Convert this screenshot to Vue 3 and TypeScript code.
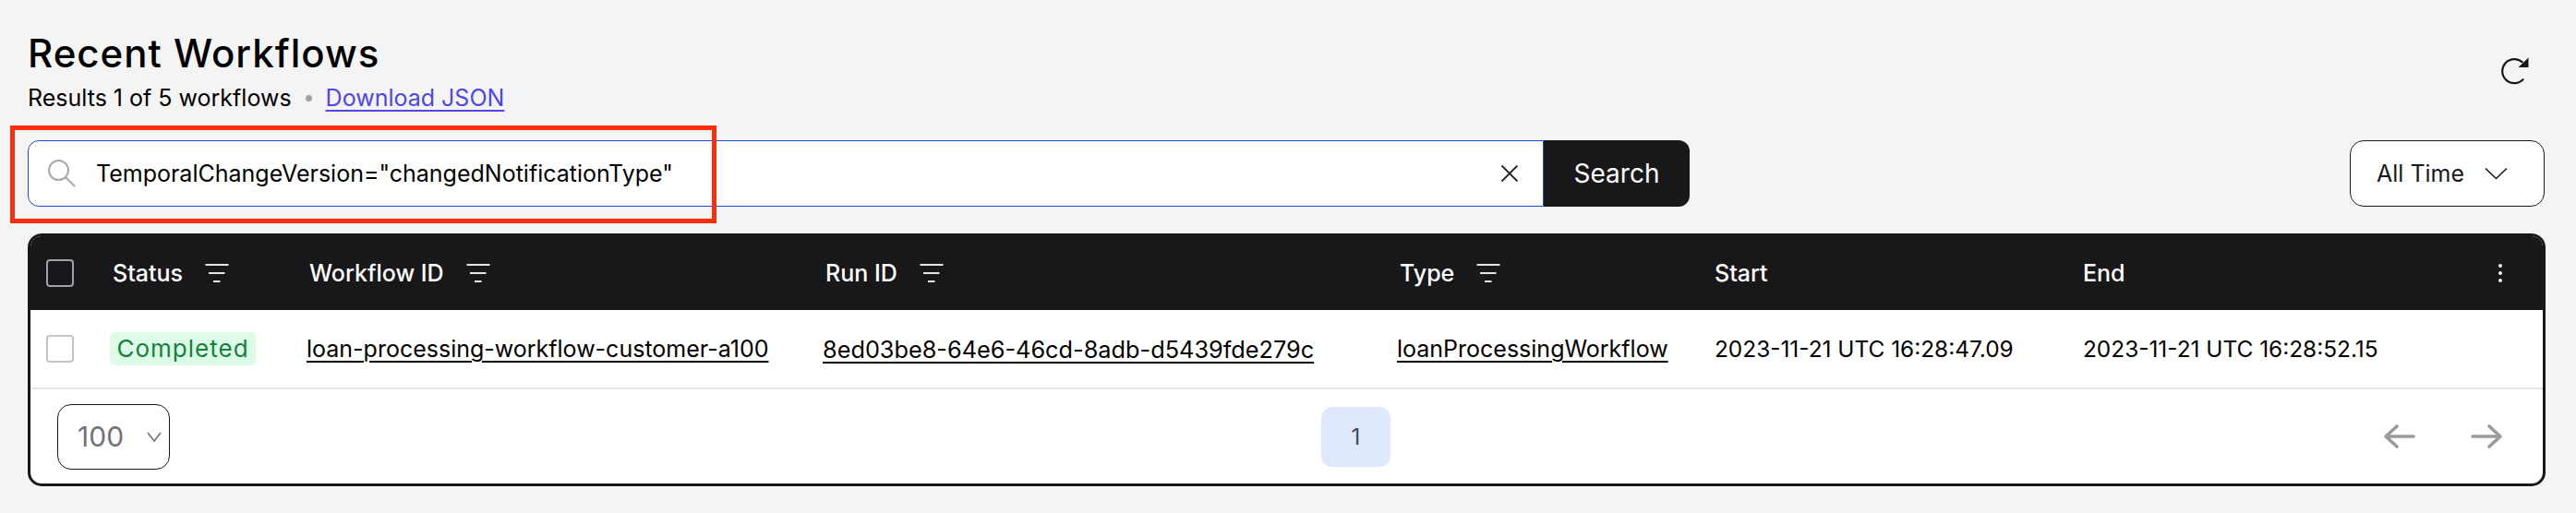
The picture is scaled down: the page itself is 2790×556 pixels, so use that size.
<template>
  <div class="page">
    <header class="page-head">
      <div class="heading">
        <h1 class="title">Recent Workflows</h1>
        <p class="summary">
          <span>Results 1 of 5 workflows</span>
          <span class="dot"></span>
          <a class="json-link" href="#">Download JSON</a>
        </p>
      </div>
      <button class="refresh" aria-label="Refresh">
        <svg width="30" height="30" viewBox="0 0 30 30" fill="none">
          <path d="M23.5 24.2A13 13 0 1 1 22.6 5.2" stroke="#18181b" stroke-width="2.2" stroke-linecap="round" />
          <path d="M29.5 0.5V11H18.5Z" fill="#18181b" />
        </svg>
      </button>
    </header>

    <div class="toolbar">
      <form class="search" @submit.prevent>
        <div class="search-field">
          <svg class="search-icon" width="30" height="30" viewBox="0 0 30 30" fill="none">
            <circle cx="11.5" cy="11.5" r="10.5" stroke="#a8a8ae" stroke-width="2" />
            <path d="M19 19L29 29" stroke="#a8a8ae" stroke-width="2" />
          </svg>
          <span class="search-text">{{ query }}</span>
          <svg class="clear-icon" width="20" height="20" viewBox="0 0 20 20" fill="none">
            <path d="M1.5 1.5L18.5 18.5M18.5 1.5L1.5 18.5" stroke="#27272a" stroke-width="1.8" />
          </svg>
        </div>
        <button class="search-btn">Search</button>
      </form>
      <button class="range">
        All Time
        <svg width="25" height="14" viewBox="0 0 25 14" fill="none">
          <path d="M1 1.5L12.500 12.500L24 1.5" stroke="#18181b" stroke-width="1.6" />
        </svg>
      </button>
    </div>

    <div class="table-wrap">
      <table class="table">
        <colgroup>
          <col v-for="w in columnWidths" :key="w" :style="{ width: w + 'px' }" />
        </colgroup>
        <thead>
          <tr>
            <th class="check-cell"><span class="check dark"></span></th>
            <th v-for="col in columns" :key="col.label" :class="{ 'time-cell': !col.filter }">
              <span class="th-inner">
                {{ col.label }}
                <svg v-if="col.filter" class="filter" width="26" height="20" viewBox="0 0 26 20" fill="none">
                  <path d="M0.5 1H25.5M4 10H21.500M9 19H16.500" stroke="#e4e4e7" stroke-width="2" />
                </svg>
              </span>
            </th>
            <th class="menu-cell">
              <svg class="menu" width="6" height="22" viewBox="0 0 6 22" fill="#f4f4f5">
                <circle cx="3" cy="3" r="2" />
                <circle cx="3" cy="11" r="2" />
                <circle cx="3" cy="19" r="2" />
              </svg>
            </th>
          </tr>
        </thead>
        <tbody>
          <tr>
            <td class="check-cell"><span class="check"></span></td>
            <td><span class="badge">Completed</span></td>
            <td><a class="cell-link" href="#">loan-processing-workflow-customer-a100</a></td>
            <td><a class="cell-link run-id" href="#">8ed03be8-64e6-46cd-8adb-d5439fde279c</a></td>
            <td><a class="cell-link" href="#">loanProcessingWorkflow</a></td>
            <td class="time-cell">2023-11-21 UTC 16:28:47.09</td>
            <td class="time-cell">2023-11-21 UTC 16:28:52.15</td>
            <td></td>
          </tr>
        </tbody>
      </table>

      <div class="table-foot">
        <div class="per-page">
          <span>100</span>
          <svg width="16" height="11" viewBox="0 0 16 11" fill="none">
            <path d="M1 1L8 10L15 1" stroke="#71717a" stroke-width="1.6" />
          </svg>
        </div>
        <span class="page-chip">1</span>
        <div class="pager">
          <svg width="34" height="26" viewBox="0 0 34 26" fill="none">
            <path d="M32 13H3M14 2L2 13L14 24" stroke="#9b9b9b" stroke-width="3.6" stroke-linecap="round" stroke-linejoin="round" />
          </svg>
          <svg width="34" height="26" viewBox="0 0 34 26" fill="none">
            <path d="M2 13H31M20 2L32 13L20 24" stroke="#9b9b9b" stroke-width="3.6" stroke-linecap="round" stroke-linejoin="round" />
          </svg>
        </div>
      </div>
    </div>

    <div class="annotation"></div>
  </div>
</template>

<script setup lang="ts">
interface Column {
  label: string
  filter: boolean
}

const query = 'TemporalChangeVersion="changedNotificationType"'

const columnWidths = [86, 213, 559, 622, 342, 399, 400, 100]

const columns: Column[] = [
  { label: 'Status', filter: true },
  { label: 'Workflow ID', filter: true },
  { label: 'Run ID', filter: true },
  { label: 'Type', filter: true },
  { label: 'Start', filter: false },
  { label: 'End', filter: false }
]
</script>

<style>
html,
body {
  margin: 0;
  background: #f4f4f4;
}
</style>

<style scoped>
.page {
  position: relative;
  box-sizing: border-box;
  width: 2790px;
  height: 556px;
  padding: 34px 30px 0;
  font-family: Inter, sans-serif;
  color: #000;
  overflow: hidden;
}

.page-head {
  display: flex;
  justify-content: space-between;
  align-items: flex-start;
}

.title {
  margin: 0;
  font-size: 42px;
  line-height: 48px;
  font-weight: 500;
  letter-spacing: 1px;
}

.summary {
  display: flex;
  align-items: center;
  margin: 9px 0 0;
  font-size: 25px;
  line-height: 30px;
}

.dot {
  width: 7px;
  height: 7px;
  margin: 0 15px;
  border-radius: 50%;
  background: #a1a1aa;
}

.json-link {
  color: #4f46e5;
  text-decoration: underline;
  text-decoration-thickness: 2px;
  text-underline-offset: 4px;
}

.refresh {
  margin: 28px 21px 0 0;
  padding: 0;
  border: 0;
  background: none;
  line-height: 0;
}

.toolbar {
  display: flex;
  justify-content: space-between;
  margin-top: 31px;
  padding-right: 4px;
}

.search {
  display: flex;
  width: 1800px;
  height: 72px;
}

.search-field {
  flex: 1;
  display: flex;
  align-items: center;
  padding: 0 26px 0 21px;
  background: #fff;
  border: 1.5px solid #1d4ed8;
  border-radius: 12px 0 0 12px;
}

.search-text {
  flex: 1;
  margin-left: 22px;
  font-size: 25px;
  white-space: nowrap;
}

.search-btn {
  width: 158px;
  border: 0;
  border-radius: 0 12px 12px 0;
  background: #18181b;
  color: #fff;
  font: 400 28px Inter, sans-serif;
}

.range {
  display: flex;
  align-items: center;
  gap: 22px;
  width: 211px;
  height: 72px;
  padding: 0 0 0 28px;
  background: #fff;
  border: 1.5px solid #18181b;
  border-radius: 15px;
  color: #18181b;
  font: 400 25px Inter, sans-serif;
}

.table-wrap {
  box-sizing: border-box;
  width: 2727px;
  margin-top: 29px;
  background: #fff;
  border: 3px solid #18181b;
  border-radius: 15px;
  overflow: hidden;
}

.table {
  width: 100%;
  table-layout: fixed;
  border-collapse: collapse;
  font-size: 24.4px;
}

th {
  height: 80px;
  padding: 0 0 0 3px;
  background: #18181b;
  color: #fff;
  font-size: 25px;
  font-weight: 500;
  text-align: left;
}

.th-inner {
  display: inline-flex;
  align-items: center;
  gap: 24px;
}

td {
  height: 84px;
  padding: 0;
  border-bottom: 2px solid #e4e4e7;
  white-space: nowrap;
}

th.time-cell,
td.time-cell {
  padding-left: 2px;
}

th.check-cell,
td.check-cell {
  padding-left: 17px;
}

.check {
  display: block;
  box-sizing: border-box;
  width: 30px;
  height: 30px;
  border: 2px solid #c4c4c8;
  border-radius: 4px;
  background: #fff;
}

.check.dark {
  border-color: #a1a1aa;
  background: transparent;
}

th.menu-cell {
  padding: 0 0 0 51px;
}

.menu {
  display: block;
}

.badge {
  display: inline-block;
  padding: 0 7.5px;
  line-height: 36px;
  border-radius: 6px;
  background: #dcfce7;
  color: #15803d;
  font-size: 26px;
  letter-spacing: 1px;
}

.cell-link {
  color: #000;
  font-size: 25px;
  text-decoration: underline;
  text-decoration-thickness: 2px;
  text-underline-offset: 4px;
}

.run-id {
  font-size: 25.300px;
}

.table-foot {
  display: flex;
  align-items: center;
  height: 102px;
  padding: 0 44px 0 29px;
}

.per-page {
  box-sizing: border-box;
  display: flex;
  align-items: center;
  justify-content: space-between;
  width: 122px;
  height: 71px;
  padding: 0 8px 0 21px;
  border: 1.5px solid #18181b;
  border-radius: 15px;
  color: #71717a;
  font-size: 30px;
}

.page-chip {
  display: flex;
  align-items: center;
  justify-content: center;
  width: 75px;
  height: 65px;
  margin-left: 1247px;
  border-radius: 12px;
  background: #dfe8fc;
  color: #3f4a5a;
  font-size: 24px;
}

.pager {
  display: flex;
  gap: 60px;
  margin-left: auto;
}

.annotation {
  position: absolute;
  left: 11px;
  top: 136px;
  box-sizing: border-box;
  width: 765px;
  height: 106px;
  border: 5px solid #ff2d0a;
}
</style>
